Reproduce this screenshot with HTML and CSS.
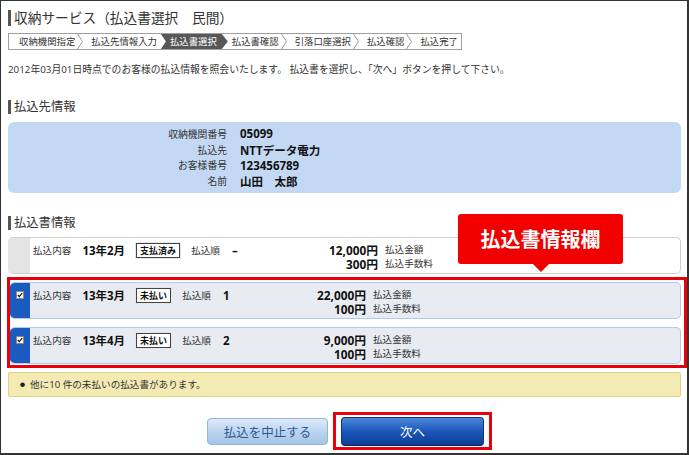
FILE: index.html
```html
<!DOCTYPE html>
<html lang="ja">
<head>
<meta charset="utf-8">
<title>収納サービス（払込書選択　民間）</title>
<link rel="stylesheet" href="styles.css">
</head>
<body>
<div class="page">
  <h1 class="title">収納サービス（払込書選択　民間）</h1>

  <div class="steps">
    <span class="step first">収納機関指定</span>
    <svg class="chev" viewBox="0 0 6 15"><polyline points="0.5,0 5.5,7.5 0.5,15"/></svg>
    <span class="step pre">払込先情報入力</span>
    <span class="step current">払込書選択</span>
    <span class="step post">払込書確認</span>
    <svg class="chev" viewBox="0 0 6 15"><polyline points="0.5,0 5.5,7.5 0.5,15"/></svg>
    <span class="step">引落口座選択</span>
    <svg class="chev" viewBox="0 0 6 15"><polyline points="0.5,0 5.5,7.5 0.5,15"/></svg>
    <span class="step">払込確認</span>
    <svg class="chev" viewBox="0 0 6 15"><polyline points="0.5,0 5.5,7.5 0.5,15"/></svg>
    <span class="step last">払込完了</span>
  </div>

  <p class="intro">2012年03月01日時点でのお客様の払込情報を照会いたします。 払込書を選択し、「次へ」ボタンを押して下さい。</p>

  <h2 class="heading">払込先情報</h2>
  <div class="payee">
    <span class="payee-label">収納機関番号</span><span class="payee-value">05099</span>
    <span class="payee-label">払込先</span><span class="payee-value">NTTデータ電力</span>
    <span class="payee-label">お客様番号</span><span class="payee-value">123456789</span>
    <span class="payee-label">名前</span><span class="payee-value">山田　太郎</span>
  </div>

  <h2 class="heading heading-bills">払込書情報</h2>

  <div class="bill paid">
    <div class="mark"></div>
    <div class="bill-body">
      <div class="info">
        <span class="lbl">払込内容</span><b class="val">13年2月</b><span class="badge">支払済み</span><span class="lbl">払込順</span><b class="val order">–</b>
      </div>
      <b class="amount">12,000円</b><span class="amount-label">払込金額</span>
      <b class="amount second">300円</b><span class="amount-label">払込手数料</span>
    </div>
  </div>

  <div class="selected-group">
    <div class="bill unpaid">
      <div class="mark">
        <svg class="check" viewBox="0 0 8 8"><rect x="0.5" y="0.5" width="7" height="7" fill="#fff" stroke="#888"/><polyline points="1.8,4 3.3,5.6 6.2,2.2" fill="none" stroke="#111" stroke-width="1.2"/></svg>
      </div>
      <div class="bill-body">
        <div class="info">
          <span class="lbl">払込内容</span><b class="val">13年3月</b><span class="badge">未払い</span><span class="lbl">払込順</span><b class="val order">1</b>
        </div>
        <b class="amount">22,000円</b><span class="amount-label">払込金額</span>
        <b class="amount second">100円</b><span class="amount-label">払込手数料</span>
      </div>
    </div>
    <div class="bill unpaid">
      <div class="mark">
        <svg class="check" viewBox="0 0 8 8"><rect x="0.5" y="0.5" width="7" height="7" fill="#fff" stroke="#888"/><polyline points="1.8,4 3.3,5.6 6.2,2.2" fill="none" stroke="#111" stroke-width="1.2"/></svg>
      </div>
      <div class="bill-body">
        <div class="info">
          <span class="lbl">払込内容</span><b class="val">13年4月</b><span class="badge">未払い</span><span class="lbl">払込順</span><b class="val order">2</b>
        </div>
        <b class="amount">9,000円</b><span class="amount-label">払込金額</span>
        <b class="amount second">100円</b><span class="amount-label">払込手数料</span>
      </div>
    </div>
  </div>

  <div class="notice"><span class="bullet">●</span>他に10 件の未払いの払込書があります。</div>

  <div class="actions">
    <button class="btn btn-cancel" type="button">払込を中止する</button>
    <div class="next-frame">
      <button class="btn btn-next" type="button">次へ</button>
    </div>
  </div>

  <div class="callout">払込書情報欄</div>
</div>
</body>
</html>
```

FILE: styles.css
```css
html, body {
  margin: 0;
  padding: 0;
  background: #fff;
}

.page {
  position: relative;
  width: 689px;
  height: 455px;
  box-sizing: border-box;
  border-style: solid;
  border-color: #333;
  border-width: 1px 2px 2px 1px;
  padding: 9px 6px 0 7px;
  overflow: hidden;
  font-family: "Open Sans", "Noto Sans CJK JP", sans-serif;
  color: #333;
}

.title {
  margin: 0;
  border-left: 3px solid #555;
  padding-left: 3px;
  font-size: 13.7px;
  font-weight: 400;
  line-height: 16px;
  height: 16px;
  color: #333;
}

/* breadcrumb */
.steps {
  display: flex;
  width: fit-content;
  margin-top: 7px;
  height: 17px;
  box-sizing: border-box;
  border: 1px solid #a0a0a0;
  font-size: 9.4px;
  line-height: 15px;
  white-space: nowrap;
  color: #333;
}

.step {
  padding: 0 2px 0 8px;
}

.step.first { padding-left: 10px; }
.step.pre { padding-right: 4px; }
.step.post { padding-left: 4px; }
.step.last { padding-right: 3px; }

.step.current {
  padding: 0 11px 0 9px;
  background: #575757;
  color: #fff;
  clip-path: polygon(0 0, calc(100% - 6px) 0, 100% 50%, calc(100% - 6px) 100%, 0 100%, 5px 50%);
}

.chev {
  flex: none;
  width: 6px;
  height: 15px;
  fill: none;
  stroke: #9a9a9a;
  stroke-width: 1;
}

.intro {
  margin: 13px 0 0;
  font-size: 9.8px;
  line-height: 14px;
  white-space: nowrap;
  color: #333;
}

.heading {
  margin: 23px 0 0;
  border-left: 3px solid #555;
  padding-left: 3px;
  font-size: 12.3px;
  font-weight: 400;
  line-height: 14px;
  height: 14px;
}

/* payee box */
.payee {
  margin-top: 8px;
  display: grid;
  grid-template-columns: 219px auto;
  column-gap: 13px;
  grid-auto-rows: 15.75px;
  align-items: center;
  padding: 4px 0;
  background: #c3d9f3;
  border-radius: 6px;
}

.payee-label {
  text-align: right;
  font-size: 9.8px;
  color: #333;
}

.payee-value {
  font-size: 11.5px;
  font-weight: 700;
  color: #111;
}

/* bills */
.bill {
  display: grid;
  grid-template-columns: 22px 1fr;
  height: 37px;
  box-sizing: border-box;
  border-radius: 5px;
  overflow: hidden;
}

.bill.paid {
  margin-top: 7px;
  background: #fff;
  border: 1px solid #cfcfcf;
  border-left: 0;
}

.bill.paid .mark {
  background: #e4e4e4;
}

.bill.unpaid {
  grid-template-columns: 20px 1fr;
  background: #e8ecf2;
  border: 1px solid #aecbed;
  border-left: 0;
}

.bill.unpaid + .bill.unpaid {
  margin-top: 8px;
}

.bill.unpaid .mark {
  background: #1b5bbf;
  display: flex;
  justify-content: center;
  padding-top: 8px;
}

.check {
  width: 8px;
  height: 8px;
}

.bill-body {
  display: grid;
  grid-template-columns: 280px 53px auto;
  grid-auto-rows: 14px;
  align-items: center;
  padding: 5px 0 0 3px;
  white-space: nowrap;
}

.bill.paid .bill-body {
  grid-template-columns: 292px 53px auto;
}

.info {
  display: flex;
  align-items: center;
  gap: 11px;
  height: 14px;
}

.lbl {
  font-size: 9.6px;
  color: #333;
}

.val {
  font-size: 11.5px;
  font-weight: 700;
  color: #111;
}

.val.order {
  margin-left: 1px;
}

.badge {
  font-size: 9px;
  font-weight: 700;
  line-height: 13px;
  padding: 0 3px;
  border: 1px solid #444;
  background: #fff;
  color: #111;
  box-shadow: 0 0 0 1px #e6e6e6;
}

.amount {
  text-align: right;
  font-size: 11.8px;
  line-height: 14px;
  font-weight: 700;
  color: #111;
}

.amount.second {
  grid-column: 2;
}

.amount-label {
  padding-left: 7px;
  font-size: 9.6px;
  line-height: 14px;
  color: #333;
}

.selected-group {
  margin: 3px -6px 0 -1px;
  border: 3px solid #e8000b;
  padding: 2px 3px 1px 0;
}

.notice {
  margin-top: 4px;
  height: 25px;
  box-sizing: border-box;
  background: #f4eab4;
  border: 1px solid #e3d27e;
  border-radius: 2px;
  padding-left: 11px;
  font-size: 9.6px;
  line-height: 23px;
  color: #333;
}

.bullet {
  font-size: 5px;
  vertical-align: 2px;
  margin-right: 5px;
  color: #222;
}

/* buttons */
.actions {
  display: flex;
  justify-content: center;
  align-items: center;
  gap: 5px;
  margin-top: 15px;
  padding-left: 10px;
}

.btn {
  font-family: "Noto Sans CJK JP", sans-serif;
  font-size: 12.5px;
  border-radius: 4px;
  padding: 0;
  cursor: pointer;
}

.btn-cancel {
  width: 121px;
  height: 27px;
  color: #2a5a97;
  background: linear-gradient(#dceaf9, #b9d3ef 55%, #a7c5e8);
  border: 1px solid #94b5dc;
}

.next-frame {
  border: 3px solid #e8000b;
  padding: 2px 5px 1px 5px;
}

.btn-next {
  display: block;
  width: 143px;
  height: 29px;
  color: #fff;
  background: linear-gradient(#4a88da, #1b56b8 50%, #0b3e98);
  border: 1px solid #0e3575;
  border-bottom-color: #0a2757;
}

/* annotation callout */
.callout {
  position: absolute;
  left: 457px;
  top: 213px;
  width: 165px;
  height: 50px;
  background: #f20000;
  border-radius: 3px;
  color: #fff;
  font-family: "Noto Sans CJK JP", sans-serif;
  font-weight: 700;
  font-size: 20px;
  line-height: 50px;
  text-align: center;
}

.callout::after {
  content: "";
  position: absolute;
  left: 75px;
  top: 50px;
  border-style: solid;
  border-width: 8px 8px 0 8px;
  border-color: #f20000 transparent transparent transparent;
}
```
